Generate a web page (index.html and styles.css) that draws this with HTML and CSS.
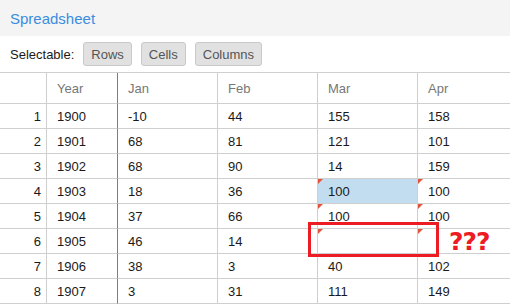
FILE: index.html
```html
<!DOCTYPE html>
<html lang="en">
  <head>
    <meta charset="utf-8" />
    <title>Spreadsheet</title>
    <link rel="stylesheet" href="styles.css">
  </head>
  <body>
    <div id="wrap">
      <div class="title">Spreadsheet</div>
      <div class="toolbar">
        <span class="label">Selectable:</span>
        <button>Rows</button>
        <button>Cells</button>
        <button>Columns</button>
      </div>
      <table class="sheet">
        <thead>
          <tr>
            <th class="num"></th>
            <th class="year">Year</th>
            <th class="month">Jan</th>
            <th class="month">Feb</th>
            <th class="month">Mar</th>
            <th>Apr</th>
          </tr>
        </thead>
        <tbody>
          <tr><td class="num">1</td><td class="year">1900</td><td>-10</td><td>44</td><td>155</td><td>158</td></tr>
          <tr><td class="num">2</td><td class="year">1901</td><td>68</td><td>81</td><td>121</td><td>101</td></tr>
          <tr><td class="num">3</td><td class="year">1902</td><td>68</td><td>90</td><td>14</td><td>159</td></tr>
          <tr><td class="num">4</td><td class="year">1903</td><td>18</td><td>36</td><td class="flag selected">100</td><td class="flag">100</td></tr>
          <tr><td class="num">5</td><td class="year">1904</td><td>37</td><td>66</td><td class="flag">100</td><td class="flag">100</td></tr>
          <tr><td class="num">6</td><td class="year">1905</td><td>46</td><td>14</td><td class="flag"></td><td class="flag"></td></tr>
          <tr><td class="num">7</td><td class="year">1906</td><td>38</td><td>3</td><td>40</td><td>102</td></tr>
          <tr><td class="num">8</td><td class="year">1907</td><td>3</td><td>31</td><td>111</td><td>149</td></tr>
        </tbody>
      </table>
      <!-- annotation drawn over the sheet -->
      <div class="mark"></div>
      <div class="mark_text">???</div>
    </div>
  </body>
</html>
```

FILE: styles.css
```css
* {
  margin: 0;
  padding: 0;
  box-sizing: border-box;
}
body {
  font-family: "Liberation Sans", Arial, sans-serif;
  font-size: 13px;
  color: #1a1a1a;
  background: #fff;
}
#wrap {
  position: relative;
  width: 510px;
  height: 306px;
  overflow: hidden;
}
.title {
  /* top bar */
  height: 36px;
  padding-left: 10px;
  display: flex;
  align-items: center;
  background-color: #f4f4f4;
  color: #3a8dde;
  font-size: 15px;
}
.toolbar {
  height: 36px;
  padding: 0 10px;
  display: flex;
  align-items: center;
  gap: 9px;
}
.toolbar button {
  height: 24px;
  padding: 0 7px;
  font-family: inherit;
  font-size: 13px;
  color: #555;
  background-color: #e1e1e1;
  border: 1px solid #c9c9c9;
  border-radius: 3px;
}
.sheet {
  width: 510px;
  table-layout: fixed;
  border-collapse: separate;
  border-spacing: 0;
  border-top: 1px solid #cfcfcf;
}
.sheet th,
.sheet td {
  text-align: left;
  font-weight: normal;
  padding: 0 0 0 10px;
  border-right: 1px solid #cfcfcf;
  border-bottom: 1px solid #cfcfcf;
  white-space: nowrap;
}
.sheet th {
  height: 31px;
  color: #777;
}
.sheet td {
  height: 25px;
  position: relative;
}
.sheet th:last-child,
.sheet td:last-child {
  border-right: 0;
}
.sheet .num {
  width: 47px;
  text-align: right;
  padding: 0 5px 0 0;
}
.sheet .year {
  width: 71px;
  border-right-color: #7d7d7d;
}
.sheet .month {
  width: 100px;
}
.sheet .selected {
  background-color: #c2dcf0;
}
.sheet .flag::before {
  /* red corner mark */
  content: "";
  position: absolute;
  top: 0;
  left: 0;
  border-top: 5px solid #e2553a;
  border-right: 5px solid transparent;
}
.mark {
  position: absolute;
  left: 308px;
  top: 222px;
  width: 131px;
  height: 35px;
  border: 3px solid #ed1c24;
}
.mark_text {
  position: absolute;
  left: 449px;
  top: 229px;
  font-family: "DejaVu Sans", sans-serif;
  font-weight: bold;
  font-size: 25px;
  line-height: 26px;
  letter-spacing: -1px;
  color: #ed1c24;
}
```
